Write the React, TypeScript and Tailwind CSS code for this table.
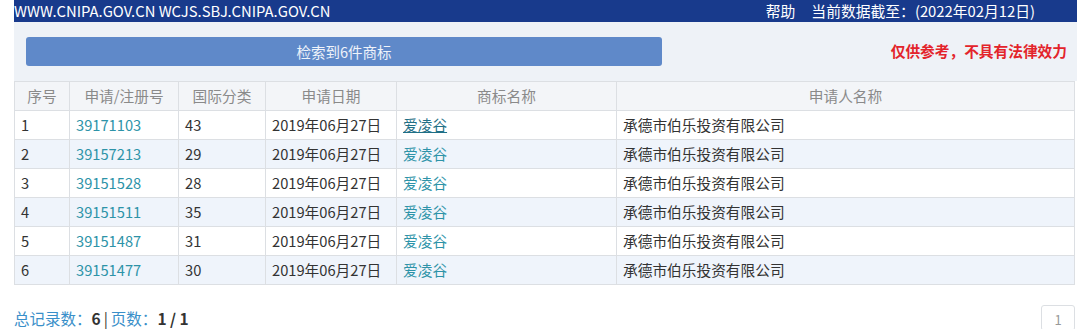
const rows = [
  { no: '1', reg: '39171103', cls: '43', date: '2019年06月27日', name: '爱凌谷', owner: '承德市伯乐投资有限公司', underline: true },
  { no: '2', reg: '39157213', cls: '29', date: '2019年06月27日', name: '爱凌谷', owner: '承德市伯乐投资有限公司' },
  { no: '3', reg: '39151528', cls: '28', date: '2019年06月27日', name: '爱凌谷', owner: '承德市伯乐投资有限公司' },
  { no: '4', reg: '39151511', cls: '35', date: '2019年06月27日', name: '爱凌谷', owner: '承德市伯乐投资有限公司' },
  { no: '5', reg: '39151487', cls: '31', date: '2019年06月27日', name: '爱凌谷', owner: '承德市伯乐投资有限公司' },
  { no: '6', reg: '39151477', cls: '30', date: '2019年06月27日', name: '爱凌谷', owner: '承德市伯乐投资有限公司' },
];

const cols = 'grid grid-cols-[54px_109px_87px_131px_220px_1fr]';

export default function App() {
  return (
    <div className="w-[1080px] h-[329px] bg-white overflow-hidden font-['Noto_Sans_CJK_SC','Noto_Sans',sans-serif] text-[14.7px]">
      <div className="ml-[14px] mr-[3px]">
        <div className="h-[22px] bg-[#183a8c] flex items-center justify-between text-white text-[14.8px] leading-none">
          <span>WWW.CNIPA.GOV.CN WCJS.SBJ.CNIPA.GOV.CN</span>
          <span className="mr-[42px]">
            帮助<span className="ml-[16px]">当前数据截至：(2022年02月12日)</span>
          </span>
        </div>
        <div className="bg-[#eef2f7] h-[59px] flex items-center justify-between pl-[12px] pr-[10px]">
          <div className="w-[636px] h-[29px] rounded-[3px] bg-[#5f89c9] text-white/90 flex items-center justify-center text-[14.5px]">
            检索到6件商标
          </div>
          <div className="text-[#e3242b] font-bold text-[14.7px]">仅供参考，不具有法律效力</div>
        </div>
        <div className="border border-[#dcdfe3] mr-[2px]">
          <div className={`${cols} h-[28px] bg-[#f3f5f8] text-[#8a8a8a] items-center`}>
            {['序号', '申请/注册号', '国际分类', '申请日期', '商标名称', '申请人名称'].map((h, i) => (
              <div key={h} className={`h-full flex items-center justify-center ${i > 0 ? 'border-l border-[#dcdfe3]' : ''}`}>
                {h}
              </div>
            ))}
          </div>
          {rows.map((r, i) => (
            <div
              key={r.no}
              className={`${cols} h-[29px] border-t border-[#dcdfe3] text-[#333] ${i % 2 === 1 ? 'bg-[#eff4fb]' : 'bg-white'}`}
            >
              <div className="flex items-center pl-[6px]">{r.no}</div>
              <div className="flex items-center pl-[6px] border-l border-[#dcdfe3] text-[#2d93a8]">{r.reg}</div>
              <div className="flex items-center pl-[6px] border-l border-[#dcdfe3]">{r.cls}</div>
              <div className="flex items-center pl-[6px] border-l border-[#dcdfe3]">{r.date}</div>
              <div className="flex items-center pl-[6px] border-l border-[#dcdfe3]">
                <span className={r.underline ? 'underline text-[#1f6f86]' : 'text-[#2d93a8]'}>{r.name}</span>
              </div>
              <div className="flex items-center pl-[6px] border-l border-[#dcdfe3]">{r.owner}</div>
            </div>
          ))}
        </div>
        <div className="flex items-start justify-between mt-[20px]">
          <div className="text-[15.5px] leading-[22px] text-[#3a8fc9] mt-[2px]">
            总记录数：<span className="font-bold text-[#333]">6</span>
            <span className="text-[#333] mx-[3px]">|</span>
            页数：<span className="font-bold text-[#333]">1 / 1</span>
          </div>
          <div className="w-[34px] h-[26px] border border-[#dcdfe3] rounded-[3px] text-[#999] text-[13px] flex justify-center pt-[4px] mr-[2px]">
            1
          </div>
        </div>
      </div>
    </div>
  );
}
